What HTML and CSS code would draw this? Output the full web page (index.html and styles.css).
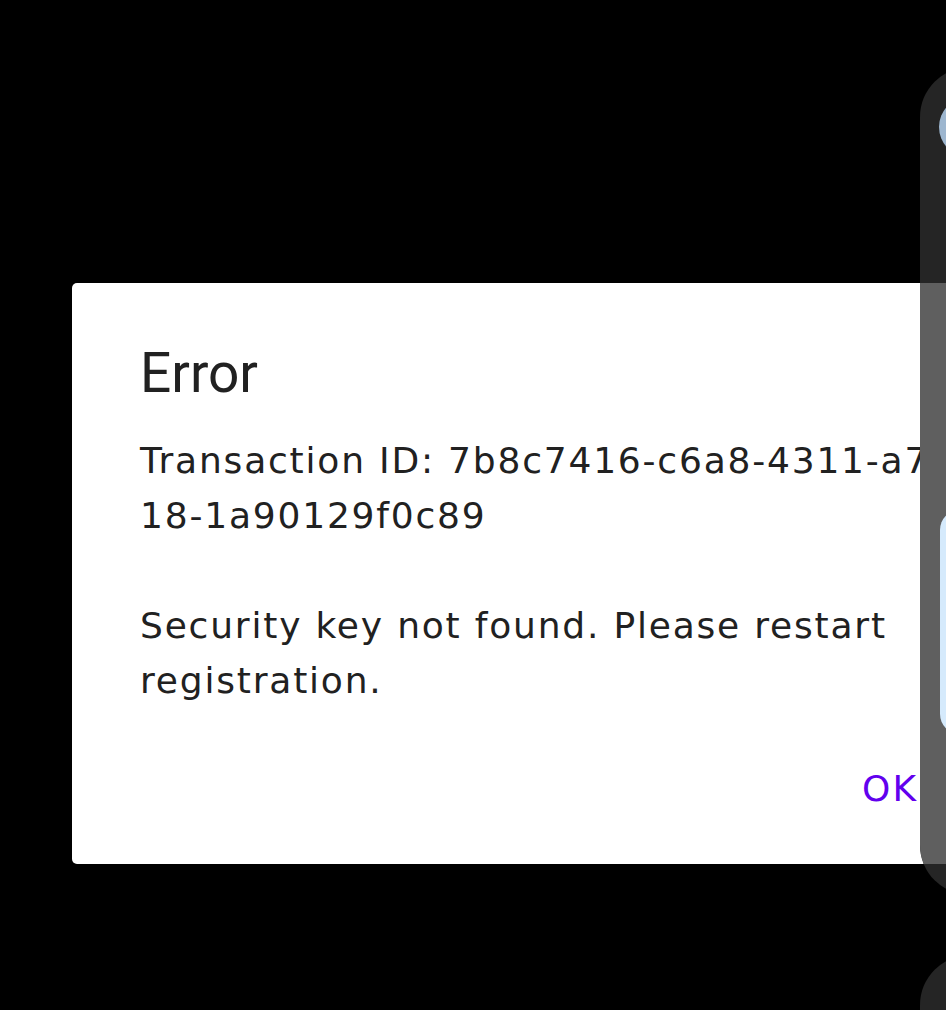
FILE: index.html
```html
<!DOCTYPE html>
<html lang="en">
<head>
    <meta charset="UTF-8">
    <meta name="viewport" content="width=device-width, initial-scale=1.0">
    <title>Error</title>
    <link rel="stylesheet" href="styles.css">
</head>
<body>
    <div class="screen">
        <!-- Dialog -->
        <div class="dialog">
            <h2 class="dialog-title">Error</h2>
            <p class="dialog-text">Transaction ID: 7b8c7416-c6a8-4311-a7<br>18-1a90129f0c89</p>
            <p class="dialog-text">Security key not found. Please restart<br>registration.</p>
            <div class="dialog-actions">
                <button class="dialog-button">OK</button>
            </div>
        </div>

        <!-- Window peeking in from the right -->
        <div class="side-window">
            <div class="side-band"></div>
            <div class="side-avatar"></div>
            <div class="side-card"></div>
        </div>
        <div class="side-next"></div>
    </div>
</body>
</html>
```

FILE: styles.css
```css
* {
    margin: 0;
    padding: 0;
    box-sizing: border-box;
}

body {
    background-color: #000;
    font-family: "DejaVu Sans", sans-serif;
    overflow: hidden;
}

.screen {
    position: relative;
    width: 946px;
    height: 1010px;
    overflow: hidden;
    padding-top: 283px;
    padding-left: 72px;
}

.dialog {
    width: 900px;
    height: 581px;
    background-color: #fff;
    border-radius: 5px;
    padding: 60px 0 0 68px;
    color: #212121;
}

.dialog-title {
    font-family: Roboto, sans-serif;
    font-weight: 400;
    font-size: 55px;
    line-height: 60px;
    margin-bottom: 30px;
}

.dialog-text {
    font-size: 36px;
    line-height: 55px;
    white-space: nowrap;
    letter-spacing: 1.8px;
    margin-bottom: 55px;
}

.dialog-text:last-of-type {
    margin-bottom: 0;
}

.dialog-actions {
    display: flex;
    justify-content: flex-end;
    width: 778px;
    margin-top: 56px;
}

.dialog-button {
    background: none;
    border: none;
    color: #6200ee;
    font-family: "DejaVu Sans", sans-serif;
    font-size: 36px;
    line-height: 50px;
    letter-spacing: 2px;
}

/* Right side window */
.side-window {
    position: absolute;
    left: 920px;
    top: 67px;
    width: 100px;
    height: 828px;
    background-color: #252525;
    border-radius: 50px 0 0 50px;
    overflow: hidden;
}

.side-band {
    position: absolute;
    left: 0;
    top: 216px;
    width: 100%;
    height: 581px;
    background-color: #5f5f5f;
}

.side-avatar {
    position: absolute;
    left: 19px;
    top: 30px;
    width: 60px;
    height: 60px;
    border-radius: 50%;
    background-color: #9db6cf;
}

.side-card {
    position: absolute;
    left: 20px;
    top: 443px;
    width: 100px;
    height: 224px;
    border-radius: 20px;
    background-color: #d5eafc;
}

.side-next {
    position: absolute;
    left: 920px;
    top: 955px;
    width: 100px;
    height: 200px;
    background-color: #252525;
    border-radius: 50px 0 0 50px;
}
```
